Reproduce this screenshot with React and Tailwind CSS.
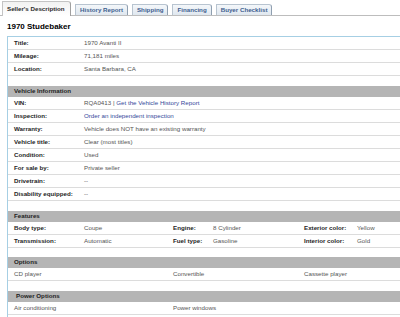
const font = { fontFamily: "'Liberation Sans', Arial, sans-serif" };

const tabs = ["History Report", "Shipping", "Financing", "Buyer Checklist"];

function Row({ label, children }) {
  return (
    <div className="flex h-[13px] items-center border-b border-[#dcdcdc] pl-[6px]">
      <span className="w-[70px] shrink-0 font-bold text-[#1e1e1e]">{label}</span>
      <span className="text-[#555]">{children}</span>
    </div>
  );
}

function Header({ children, indent }) {
  return (
    <div
      className={
        "flex h-[11px] items-center bg-[#b5b5b5] font-bold text-[#1e1e1e] " +
        (indent ? "pl-[8px]" : "pl-[6px]")
      }
    >
      {children}
    </div>
  );
}

function GridRow({ cells }) {
  // columns line up with x = 14, 84, 173, 213, 304, 357
  return (
    <div className="grid h-[13px] grid-cols-[70px_89px_40px_91px_53px_1fr] items-center border-b border-[#dcdcdc] pl-[6px] text-[#555]">
      {cells.map((c, i) => (
        <span key={i} className={i % 2 === 0 ? "font-bold text-[#1e1e1e]" : ""}>
          {c}
        </span>
      ))}
    </div>
  );
}

function OptionRow({ items }) {
  return (
    <div className="grid h-[13px] grid-cols-[159px_131px_1fr] items-center border-b border-[#dcdcdc] pl-[6px] text-[#555]">
      {items.map((c, i) => (
        <span key={i}>{c}</span>
      ))}
    </div>
  );
}

export default function App() {
  return (
    <div className="h-[317px] w-[400px] overflow-hidden bg-white text-[6.2px] leading-none" style={font}>
      {/* tab strip */}
      <div className="flex h-[16px] items-end gap-[4px] border-b border-[#bdbdbd] pl-[2px]">
        <div className="relative -mb-px flex h-[15px] w-[69px] items-center rounded-tr-[3px] border border-b-0 border-r-[#a0a0a0] border-[#c4c4c4] bg-gradient-to-b from-[#f2f2f2] to-white pl-[4px] font-bold text-[#2a2a2a]">
          Seller's Description
        </div>
        {tabs.map((t) => (
          <div
            key={t}
            className="flex h-[11px] items-center rounded-tr-[3px] border border-b-0 border-r-[#8f9fb0] border-[#b8c4d0] bg-gradient-to-b from-[#f4f7fa] to-[#dfe7ef] px-[4px] font-bold text-[#3f5f8f]"
          >
            {t}
          </div>
        ))}
      </div>

      <div className="pl-[7px] pt-[7px]">
        <div className="h-[13px] text-[8px] font-bold text-black">1970 Studebaker</div>

        <div className="border-l border-t border-[#a6cfe4]">
          <Row label="Title:">1970 Avanti II</Row>
          <Row label="Mileage:">71,181 miles</Row>
          <Row label="Location:">Santa Barbara, CA</Row>
          <div className="h-[10px]" />

          <Header>Vehicle Information</Header>
          <Row label="VIN:">
            RQA0413 | <span className="text-[#34499a]">Get the Vehicle History Report</span>
          </Row>
          <Row label="Inspection:">
            <span className="text-[#34499a]">Order an independent inspection</span>
          </Row>
          <Row label="Warranty:">Vehicle does NOT have an existing warranty</Row>
          <Row label="Vehicle title:">Clear (most titles)</Row>
          <Row label="Condition:">Used</Row>
          <Row label="For sale by:">Private seller</Row>
          <Row label="Drivetrain:">--</Row>
          <Row label="Disability equipped:">--</Row>
          <div className="h-[10px]" />

          <Header>Features</Header>
          <GridRow cells={["Body type:", "Coupe", "Engine:", "8 Cylinder", "Exterior color:", "Yellow"]} />
          <GridRow cells={["Transmission:", "Automatic", "Fuel type:", "Gasoline", "Interior color:", "Gold"]} />
          <div className="h-[9px]" />

          <Header>Options</Header>
          <OptionRow items={["CD player", "Convertible", "Cassette player"]} />
          <div className="h-[10px]" />

          <Header indent>Power Options</Header>
          <OptionRow items={["Air conditioning", "Power windows"]} />
          <div className="h-[10px]" />
        </div>
      </div>
    </div>
  );
}
